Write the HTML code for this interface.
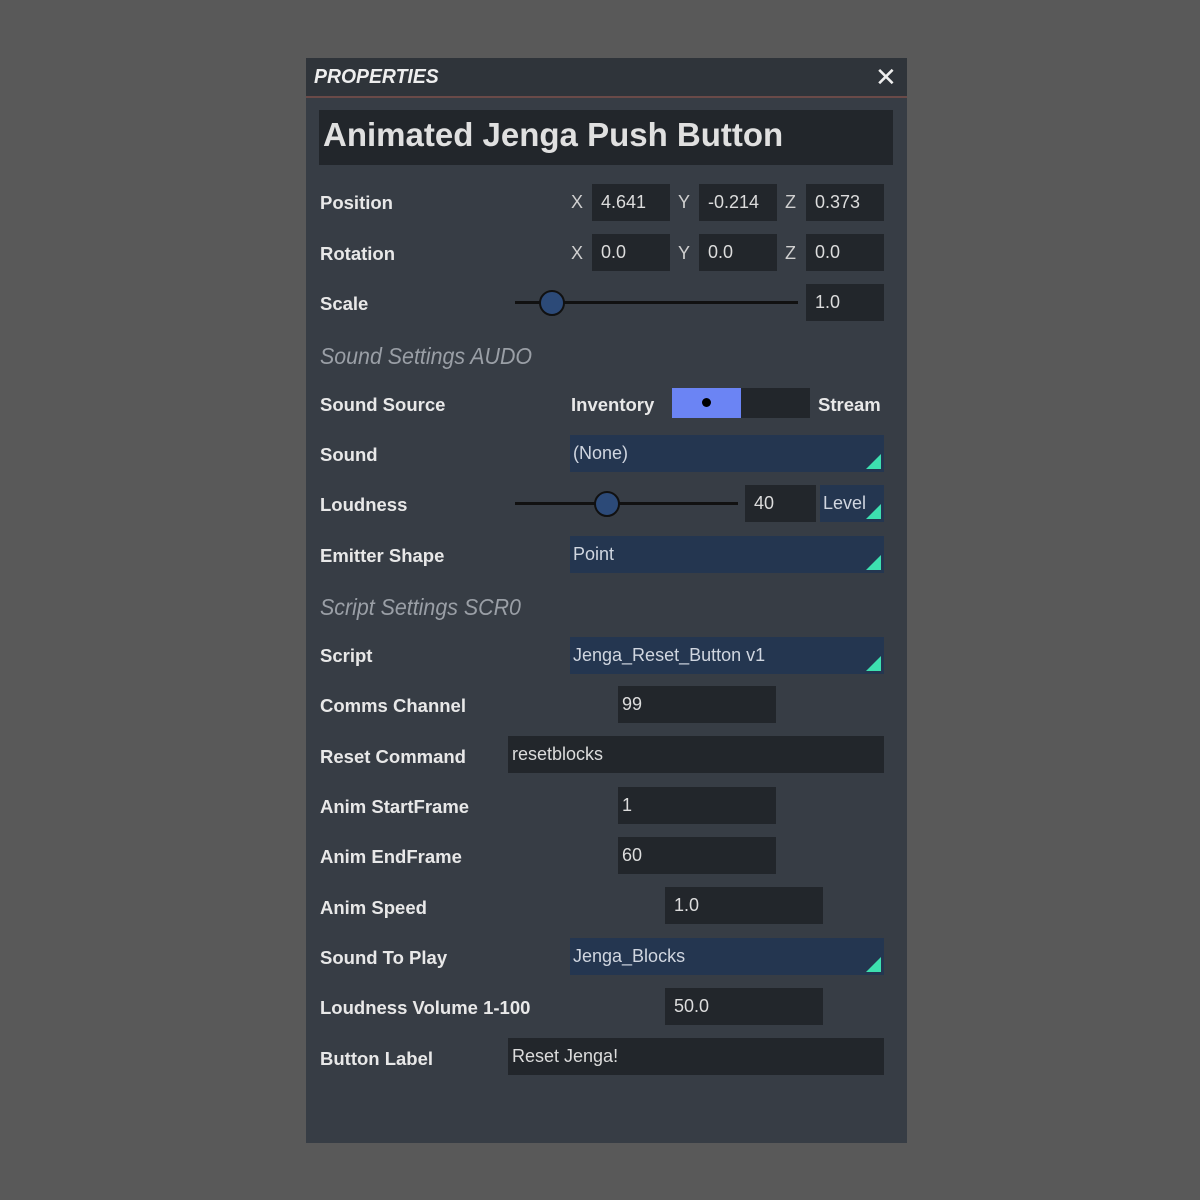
<!DOCTYPE html>
<html><head><style>
body{margin:0;width:1200px;height:1200px;background:#595959;position:relative;overflow:hidden;font-family:"Liberation Sans",sans-serif;}
.p{position:absolute;left:306px;top:58px;width:601px;height:1085px;background:#373d45;}
.h{position:absolute;left:306px;top:58px;width:601px;height:38px;background:#2f343a;border-bottom:2px solid #6a4a48;}
.a{position:absolute;}
.l{position:absolute;left:320px;color:#e8e8e8;font-size:18.5px;font-weight:bold;}
.b{position:absolute;background:#22262b;color:#dcdcdc;font-size:18px;box-sizing:border-box;padding-left:9px;height:37px;line-height:37px;}
.d{position:absolute;background:#243650;color:#d0d6e0;font-size:18px;box-sizing:border-box;padding-left:3px;height:37px;line-height:37px;}
.d:after{content:"";position:absolute;right:3px;bottom:3px;width:0;height:0;border-left:15px solid transparent;border-bottom:15px solid #3de0b0;}
.x{position:absolute;color:#d0d0d0;font-size:18px;}
.s{position:absolute;left:320px;color:#9a9fa6;font-size:23px;font-style:italic;transform:scaleX(0.93);transform-origin:left;}
.line{position:absolute;height:3px;background:#111;}
.k{position:absolute;width:22px;height:22px;border-radius:50%;background:#2c4a78;border:2px solid #111;}
</style></head><body>
<div class="p"></div>
<div class="h"></div>
<div class="a" style="left:314px;top:66px;color:#eee;font-size:20px;font-weight:bold;font-style:italic;transform:scaleX(0.97);transform-origin:left;">PROPERTIES</div>
<div class="a" style="left:875px;top:62px;color:#eee;font-size:26px;">✕</div>
<div class="a" style="left:319px;top:110px;width:574px;height:55px;background:#22262b;"></div>
<div class="a" style="left:323px;top:116px;color:#e0e0e0;font-size:33px;font-weight:bold;">Animated Jenga Push Button</div>

<div class="l" style="top:192px">Position</div>
<div class="x" style="left:571px;top:192px">X</div><div class="b" style="left:592px;top:184px;width:78px">4.641</div>
<div class="x" style="left:678px;top:192px">Y</div><div class="b" style="left:699px;top:184px;width:78px">-0.214</div>
<div class="x" style="left:785px;top:192px">Z</div><div class="b" style="left:806px;top:184px;width:78px">0.373</div>

<div class="l" style="top:243px">Rotation</div>
<div class="x" style="left:571px;top:243px">X</div><div class="b" style="left:592px;top:234px;width:78px">0.0</div>
<div class="x" style="left:678px;top:243px">Y</div><div class="b" style="left:699px;top:234px;width:78px">0.0</div>
<div class="x" style="left:785px;top:243px">Z</div><div class="b" style="left:806px;top:234px;width:78px">0.0</div>

<div class="l" style="top:293px">Scale</div>
<div class="line" style="left:515px;top:301px;width:283px"></div>
<div class="k" style="left:539px;top:290px"></div>
<div class="b" style="left:806px;top:284px;width:78px">1.0</div>

<div class="s" style="top:343px">Sound Settings  AUDO</div>

<div class="l" style="top:394px">Sound Source</div>
<div class="a" style="left:571px;top:394px;color:#e8e8e8;font-size:18.5px;font-weight:bold;">Inventory</div>
<div class="a" style="left:672px;top:388px;width:69px;height:30px;background:#6b84f4;"></div>
<div class="a" style="left:741px;top:388px;width:69px;height:30px;background:#22262b;"></div>
<div class="a" style="left:702px;top:398px;width:9px;height:9px;border-radius:50%;background:#000;"></div>
<div class="a" style="left:818px;top:394px;color:#e8e8e8;font-size:18.5px;font-weight:bold;">Stream</div>

<div class="l" style="top:444px">Sound</div>
<div class="d" style="left:570px;top:435px;width:314px">(None)</div>

<div class="l" style="top:494px">Loudness</div>
<div class="line" style="left:515px;top:502px;width:223px"></div>
<div class="k" style="left:594px;top:491px"></div>
<div class="b" style="left:745px;top:485px;width:71px">40</div>
<div class="d" style="left:820px;top:485px;width:64px">Level</div>

<div class="l" style="top:545px">Emitter Shape</div>
<div class="d" style="left:570px;top:536px;width:314px">Point</div>

<div class="s" style="top:594px">Script Settings  SCR0</div>

<div class="l" style="top:645px">Script</div>
<div class="d" style="left:570px;top:637px;width:314px">Jenga_Reset_Button v1</div>

<div class="l" style="top:695px">Comms Channel</div>
<div class="b" style="left:618px;top:686px;width:158px;padding-left:4px">99</div>

<div class="l" style="top:746px">Reset Command</div>
<div class="b" style="left:508px;top:736px;width:376px;padding-left:4px">resetblocks</div>

<div class="l" style="top:796px">Anim StartFrame</div>
<div class="b" style="left:618px;top:787px;width:158px;padding-left:4px">1</div>

<div class="l" style="top:846px">Anim EndFrame</div>
<div class="b" style="left:618px;top:837px;width:158px;padding-left:4px">60</div>

<div class="l" style="top:897px">Anim Speed</div>
<div class="b" style="left:665px;top:887px;width:158px">1.0</div>

<div class="l" style="top:947px">Sound To Play</div>
<div class="d" style="left:570px;top:938px;width:314px">Jenga_Blocks</div>

<div class="l" style="top:997px">Loudness Volume 1-100</div>
<div class="b" style="left:665px;top:988px;width:158px">50.0</div>

<div class="l" style="top:1048px">Button Label</div>
<div class="b" style="left:508px;top:1038px;width:376px;padding-left:4px">Reset Jenga!</div>
</body></html>
